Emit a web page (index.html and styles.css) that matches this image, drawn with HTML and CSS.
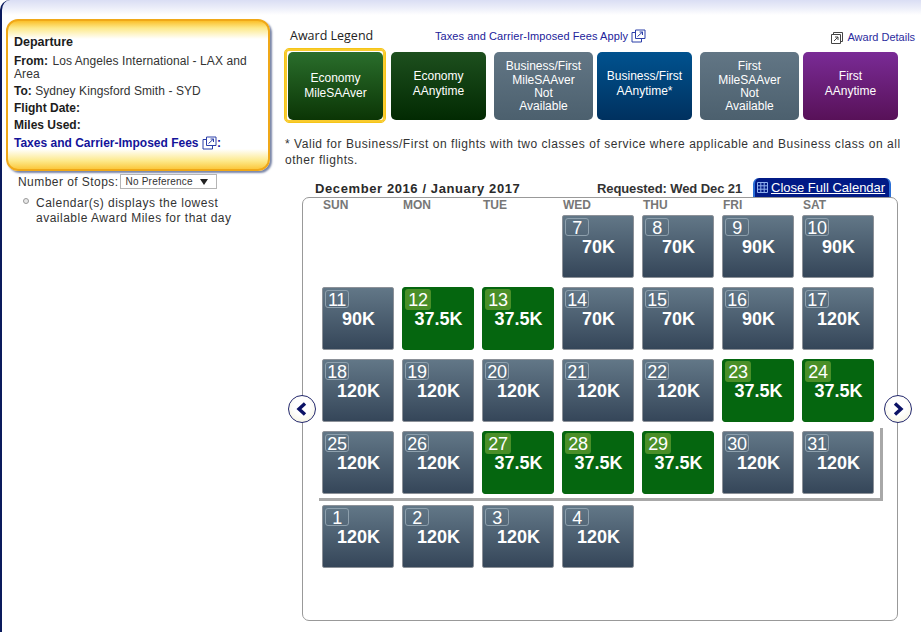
FILE: index.html
```html
<!DOCTYPE html>
<html lang="en">
<head>
<meta charset="utf-8">
<title>Award Calendar</title>
<link rel="stylesheet" href="styles.css">
</head>
<body>
<div class="frame">
  <aside class="side">
    <section class="card">
      <h2 class="card-title">Departure</h2>
      <p class="card-line card-wrap"><b class="from-label">From:</b> Los Angeles International - LAX and Area</p>
      <p class="card-line"><b>To:</b> Sydney Kingsford Smith - SYD</p>
      <p class="card-line"><b>Flight Date:</b></p>
      <p class="card-line"><b>Miles Used:</b></p>
      <p class="card-line card-fees"><b><a class="fees-link">Taxes and Carrier-Imposed Fees</a> <svg class="ext" viewBox="0 0 15 14"><path d="M1 3.500h3M1 3.500v9.500h9.500v-3M4.500 1h9.500v8.500h-9.500z M6.500 7.500l5-4.500M8.500 3h3v3" fill="none" stroke="#2b3ea8" stroke-width="1"/></svg>:</b></p>
    </section>
    <div class="stops">
      <span>Number of Stops:</span>
      <div class="select"><span>No Preference</span><span class="caret"></span></div>
    </div>
    <div class="hint">
      <span class="radio"></span>
      <p class="hint-text">Calendar(s) displays the lowest available Award Miles for that day</p>
    </div>
  </aside>
  <main class="content">
    <div class="legend-head">
      <span class="legend-title">Award Legend</span>
      <a class="legend-fees">Taxes and Carrier-Imposed Fees Apply <svg class="ext" viewBox="0 0 15 14"><path d="M1 3.500h3M1 3.500v9.500h9.500v-3M4.500 1h9.500v8.500h-9.500z M6.500 7.500l5-4.500M8.500 3h3v3" fill="none" stroke="#2b3ea8" stroke-width="1"/></svg></a>
      <a class="legend-details"><svg class="ext-dark" viewBox="0 0 12 12"><path d="M.5 2.500h9v9h-9zM2.500 2.500v-2h9v9h-2M3 9l4-4M4 5h3v3" fill="none" stroke="#444" stroke-width="1"/></svg> Award Details</a>
    </div>
    <div class="legend">
      <div class="legend-selected"><div class="tile tile-eco-saver two">Economy<br>MileSAAver</div></div>
      <div class="tile tile-eco-any two gap-a">Economy<br>AAnytime</div>
      <div class="tile tile-na wide four gap-b"><span class="tile-first-line">Business/First</span>MileSAAver<br>Not<br>Available</div>
      <div class="tile tile-biz two gap-a">Business/First<br>AAnytime*</div>
      <div class="tile tile-na wide four gap-b"><span class="tile-first-line">First</span>MileSAAver<br>Not<br>Available</div>
      <div class="tile tile-first two">First<br>AAnytime</div>
    </div>
    <p class="note">* Valid for Business/First on flights with two classes of service where applicable and Business class on all other flights.</p>
    <div class="cal-head">
      <span class="cal-month">December 2016 / January 2017</span>
      <span class="cal-req">Requested: Wed Dec 21</span>
      <a class="cal-close"><svg class="grid-icon" viewBox="0 0 11 11"><path d="M.5.500h10v10H.500zM.500 3.800h10M.500 7.200h10M3.800.500v10M7.200.500v10" fill="none" stroke="#8fb0ee" stroke-width="1"/></svg><span class="cal-close-text">Close Full Calendar</span></a>
    </div>
    <div class="calendar">
      <div class="dow"><span>SUN</span><span>MON</span><span>TUE</span><span>WED</span><span>THU</span><span>FRI</span><span>SAT</span></div>
      <div class="week">
        <div class="blank"></div><div class="blank"></div><div class="blank"></div>
        <div class="day"><span class="num">7</span><span class="price">70K</span></div>
        <div class="day"><span class="num">8</span><span class="price">70K</span></div>
        <div class="day"><span class="num">9</span><span class="price">90K</span></div>
        <div class="day"><span class="num">10</span><span class="price">90K</span></div>
      </div>
      <div class="week">
        <div class="day"><span class="num">11</span><span class="price">90K</span></div>
        <div class="day on"><span class="num">12</span><span class="price">37.5K</span></div>
        <div class="day on"><span class="num">13</span><span class="price">37.5K</span></div>
        <div class="day"><span class="num">14</span><span class="price">70K</span></div>
        <div class="day"><span class="num">15</span><span class="price">70K</span></div>
        <div class="day"><span class="num">16</span><span class="price">90K</span></div>
        <div class="day"><span class="num">17</span><span class="price">120K</span></div>
      </div>
      <div class="week">
        <div class="day"><span class="num">18</span><span class="price">120K</span></div>
        <div class="day"><span class="num">19</span><span class="price">120K</span></div>
        <div class="day"><span class="num">20</span><span class="price">120K</span></div>
        <div class="day"><span class="num">21</span><span class="price">120K</span></div>
        <div class="day"><span class="num">22</span><span class="price">120K</span></div>
        <div class="day on"><span class="num">23</span><span class="price">37.5K</span></div>
        <div class="day on"><span class="num">24</span><span class="price">37.5K</span></div>
      </div>
      <div class="week week-last-month">
        <div class="day"><span class="num">25</span><span class="price">120K</span></div>
        <div class="day"><span class="num">26</span><span class="price">120K</span></div>
        <div class="day on"><span class="num">27</span><span class="price">37.5K</span></div>
        <div class="day on"><span class="num">28</span><span class="price">37.5K</span></div>
        <div class="day on"><span class="num">29</span><span class="price">37.5K</span></div>
        <div class="day"><span class="num">30</span><span class="price">120K</span></div>
        <div class="day"><span class="num">31</span><span class="price">120K</span></div>
      </div>
      <div class="week">
        <div class="day"><span class="num">1</span><span class="price">120K</span></div>
        <div class="day"><span class="num">2</span><span class="price">120K</span></div>
        <div class="day"><span class="num">3</span><span class="price">120K</span></div>
        <div class="day"><span class="num">4</span><span class="price">120K</span></div>
      </div>
      <button class="nav nav-prev" aria-label="Previous"><svg viewBox="0 0 14 14"><path d="M10 1.500L4 7l6 5.500" fill="none" stroke="#0b1266" stroke-width="3.400"/></svg></button>
      <button class="nav nav-next" aria-label="Next"><svg viewBox="0 0 14 14"><path d="M4 1.500L10 7l-6 5.500" fill="none" stroke="#0b1266" stroke-width="3.400"/></svg></button>
    </div>
  </main>
</div>
</body>
</html>
```
FILE: styles.css
```css
* { box-sizing: border-box; }
html, body { margin: 0; padding: 0; }
body { background: #fff; font-family: "Liberation Sans", Arial, sans-serif; font-size: 12px; color: #222; overflow: hidden; }
p, h2 { margin: 0; }

.frame {
  width: 921px; height: 632px; display: flex; overflow: hidden;
  border-left: 2px solid #0a1a5c; border-top-left-radius: 10px;
  background: linear-gradient(#dadef4 0, #eceef9 8px, #fff 15px);
}

/* Left column */
.side { width: 282px; flex: none; padding: 19px 0 0 4px; }
.card {
  width: 264px; height: 152px; padding: 14px 6px 0 6px;
  border: 2px solid #f0a818; border-radius: 12px;
  background: linear-gradient(#fbc02a 0, #fde98a 7px, #fff 18px, #fff 128px, #fde98a 140px, #fbc02a 150px);
  box-shadow: 2px 2px 2px #7a86a8;
  color: #333;
}
.card-title { font-size: 12.500px; font-weight: bold; line-height: 14px; margin-bottom: 6px; color: #1c1c1c; }
.card-line { line-height: 12px; margin-bottom: 5px; letter-spacing: .08px; }
.card-wrap { line-height: 13px; margin-bottom: 4px; }
.card-line b { color: #1c1c1c; letter-spacing: 0; }
.from-label { margin-right: 1px; }
.card-fees b, .card-fees .fees-link { color: #14149a; }
.ext { width: 15px; height: 14px; vertical-align: -3px; }
.ext-dark { width: 12px; height: 12px; vertical-align: -3px; }

.stops { display: flex; align-items: center; margin: 3px 0 0 12px; font-size: 12px; letter-spacing: .45px; color: #333; }
.select {
  width: 97px; height: 15px; margin-left: 1px; padding: 0 5px;
  display: flex; align-items: center; justify-content: space-between;
  border: 1px solid #b5b5b5; background: #fff; font-size: 10px; letter-spacing: .2px;
}
.caret { width: 0; height: 0; margin-right: 3px; border-left: 4px solid transparent; border-right: 4px solid transparent; border-top: 6px solid #222; }

.hint { display: flex; margin: 7px 0 0 17px; }
.radio { width: 6px; height: 6px; margin-top: 2px; border: 1px solid #999; border-radius: 50%; background: #e8e8e8; flex: none; }
.hint-text { width: 215px; margin-left: 7px; line-height: 15px; letter-spacing: .5px; color: #333; }

/* Right column */
.content { flex: 1; min-width: 0; padding-top: 27px; }
.legend-head { display: flex; align-items: center; height: 17px; position: relative; }
.legend-title { width: 151px; padding-left: 6px; font-family: "Open Sans", sans-serif; font-size: 12.500px; color: #222; }
.legend-fees { width: 213px; font-size: 11px; color: #22229a; letter-spacing: .08px; white-space: nowrap; }
.legend-details { margin-left: 183px; padding-top: 4px; font-size: 11px; color: #2b2b9e; white-space: nowrap; }
.legend-details .ext-dark { margin-right: 2px; }

.legend { display: flex; align-items: center; margin-top: 4px; }
.legend-selected { padding: 3px; border-radius: 5px; border: 1px solid #f5c518; box-shadow: inset 0 0 0 2px #f9cb2e; margin-right: 5px; height: 75px; width: 102px; }
.tile { width: 95px; height: 68px; flex: none; border-radius: 5px; color: #fff; text-align: center; font-size: 12px; line-height: 15px; }
.tile.wide { width: 99px; }
.tile.two { padding-top: 17px; }
.tile.four { padding-top: 6px; line-height: 13px; }
.tile-first-line { display: block; line-height: 16px; }
.tile.gap-a { margin-right: 8px; }
.tile.gap-b { margin-right: 4px; }
.legend-selected .tile.tile-eco-saver { padding-top: 19px; line-height: 14.500px; }
.tile-eco-saver { background: linear-gradient(#2a6e2c, #0b3505); }
.tile-eco-any { background: linear-gradient(#1d4f1e, #022a02); }
.tile-na { background: linear-gradient(#627685, #4c606e); }
.tile-biz { background: linear-gradient(#00528f, #00315f); }
.tile-first { background: linear-gradient(#7a2b96, #581158); }

.note { margin: 13px 0 0 1px; width: 625px; line-height: 16px; letter-spacing: .54px; color: #333; }

.cal-head { display: flex; align-items: flex-end; height: 19px; margin: 10px 0 0 31px; }
.cal-month { width: 282px; margin-bottom: 1px; font-size: 13px; font-weight: bold; line-height: 15px; letter-spacing: .6px; color: #2a2a2a; white-space: nowrap; }
.cal-req { width: 156px; margin-bottom: 1px; font-size: 13px; font-weight: bold; line-height: 15px; letter-spacing: -.1px; color: #333; white-space: nowrap; }
.cal-close {
  width: 138px; height: 19px; display: flex; align-items: center; padding-left: 2px;
  background: #011a86; border-left: 2px solid #2b6fd6; border-right: 2px solid #2b6fd6;
  border-radius: 6px 6px 0 0; color: #fff; white-space: nowrap;
}
.grid-icon { width: 11px; height: 11px; flex: none; margin-right: 3px; }
.cal-close-text { text-decoration: underline; font-size: 13px; }

.calendar {
  position: relative; width: 596px; height: 424px; margin: 0 0 0 18px; padding: 0 0 0 19px;
  border: 1px solid #999; border-radius: 7px; background: #fff;
}
.dow { display: flex; gap: 8px; height: 17px; font-weight: bold; font-size: 12px; line-height: 14px; color: #777; }
.dow span { width: 72px; padding-left: 1px; }
.week { display: flex; gap: 8px; height: 63px; margin-bottom: 9px; }
.blank { width: 72px; }
.day {
  width: 72px; height: 63px; flex: none; padding: 2px 0 0 2px;
  border: 1px solid #8c9198; border-radius: 2px;
  background: linear-gradient(#627787, #354659); color: #fff;
}
.day.on { background: #05660f; border-color: #05660f; border-radius: 3px; }
.num {
  display: block; width: 24px; height: 18px; border: 1px solid #8ea0ad; border-radius: 3px;
  text-align: center; font-size: 18px; line-height: 18px; letter-spacing: -.3px;
}
.on .num { width: 26px; height: 21px; margin-top: -1px; border: 0; background: #4a8f28; line-height: 22px; }
.price { display: block; margin-top: 1px; margin-left: -1px; text-align: center; font-size: 18px; font-weight: bold; line-height: 20px; }
.on .price { margin-top: -1px; }

.week-last-month { position: relative; margin-bottom: 11px; }
.week-last-month::after {
  content: ""; position: absolute; left: -3px; top: -3px; width: 561px; height: 70px;
  border-right: 3px solid #a8a8a8; border-bottom: 3px solid #a8a8a8; pointer-events: none;
}

.nav {
  position: absolute; top: 197px; width: 28px; height: 28px; padding: 0;
  display: flex; align-items: center; justify-content: center;
  border: 1px solid #23286e; border-radius: 50%;
  background: radial-gradient(circle at 50% 40%, #fff 40%, #f2f0d8 100%);
}
.nav svg { width: 14px; height: 14px; }
.nav-prev { left: -15px; }
.nav-next { right: -15px; }
```
